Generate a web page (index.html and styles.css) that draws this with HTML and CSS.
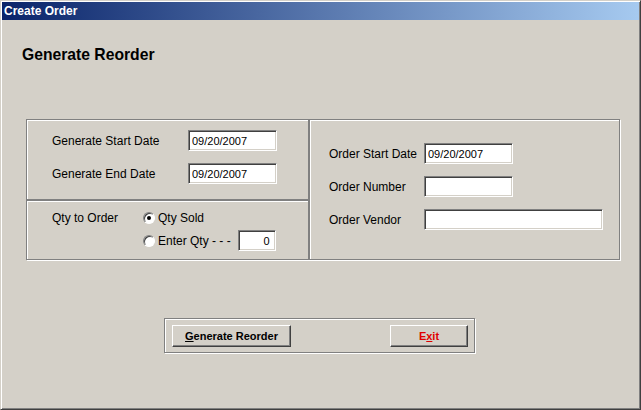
FILE: index.html
```html
<!DOCTYPE html>
<html lang="en">
<head>
    <meta charset="UTF-8">
    <title>Create Order</title>
    <link rel="stylesheet" href="styles.css">
</head>
<body>

<div class="window">
    <div class="title-bar">Create Order</div>
    <div class="content">
        <h1 class="heading">Generate Reorder</h1>

        <div class="groups">
            <div class="frame frame-dates">
                <label class="label">Generate Start Date</label>
                <input type="text" class="field" value="09/20/2007">
                <label class="label">Generate End Date</label>
                <input type="text" class="field" value="09/20/2007">
            </div>

            <div class="frame frame-qty">
                <span class="label">Qty to Order</span>
                <div class="options">
                    <div class="option">
                        <span class="radio checked"></span>
                        <span>Qty Sold</span>
                    </div>
                    <div class="option">
                        <span class="radio"></span>
                        <span>Enter Qty - - -</span>
                        <input type="text" class="field field-qty" value="0">
                    </div>
                </div>
            </div>

            <div class="frame frame-order">
                <label class="label">Order Start Date</label>
                <input type="text" class="field" value="09/20/2007">
                <label class="label">Order Number</label>
                <input type="text" class="field" value="">
                <label class="label">Order Vendor</label>
                <input type="text" class="field field-wide" value="">
            </div>
        </div>

        <div class="frame actions">
            <button class="btn btn-generate"><u>G</u>enerate Reorder</button>
            <button class="btn btn-exit">E<u>x</u>it</button>
        </div>
    </div>
</div>

</body>
</html>
```

FILE: styles.css
```css
body {
    margin: 0;
    font-family: "Liberation Sans", Arial, sans-serif;
    background: #d4d0c8;
}
.window {
    width: 641px;
    height: 410px;
    box-sizing: border-box;
    background: #d4d0c8;
    border: 1px solid;
    border-color: #d4d0c8 #404040 #404040 #d4d0c8;
    box-shadow: inset 1px 1px 0 #fff, inset -1px -1px 0 #808080;
    padding: 1px;
}
.title-bar {
    height: 18px;
    line-height: 18px;
    padding-left: 2px;
    background: linear-gradient(to right, #0a246a, #a6caf0);
    color: #fff;
    font-weight: bold;
    font-size: 12px;
}
.content {
    padding-top: 25px;
}
.heading {
    margin: 0 0 0 20px;
    font-size: 15.7px;
    line-height: 19px;
    font-weight: bold;
}
.groups {
    display: grid;
    grid-template-columns: 283px 311px;
    grid-template-rows: 81px 60px;
    margin: 55px 0 0 24px;
}
.frame {
    box-sizing: border-box;
    border: 1px solid #808080;
    box-shadow: inset 1px 1px 0 #fff, 1px 1px 0 #fff;
}
.label {
    font-size: 12px;
}
.field {
    box-sizing: border-box;
    width: 89px;
    height: 21px;
    margin: 0;
    padding: 0 3px;
    font-family: "Liberation Sans", Arial, sans-serif;
    font-size: 11px;
    color: #000;
    background: #fff;
    border: 1px solid;
    border-color: #808080 #fff #fff #808080;
    box-shadow: inset 1px 1px 0 #404040, inset -1px -1px 0 #d4d0c8;
    outline: none;
}
.frame-dates {
    display: grid;
    grid-template-columns: 136px 89px;
    grid-auto-rows: 21px;
    row-gap: 12px;
    align-items: center;
    padding: 10px 0 0 25px;
}
.frame-qty {
    grid-column: 1;
    grid-row: 2;
    display: flex;
    align-items: flex-start;
    padding: 10px 0 0 25px;
}
.frame-qty .label {
    width: 91px;
    line-height: 14px;
}
.options {
    display: flex;
    flex-direction: column;
    gap: 5px;
    font-size: 12px;
}
.option {
    display: flex;
    align-items: center;
    gap: 3px;
    line-height: 14px;
}
.field-qty {
    width: 38px;
    margin-left: 4px;
    text-align: right;
    padding-right: 5px;
}
.radio {
    position: relative;
    width: 12px;
    height: 12px;
    box-sizing: border-box;
    border-radius: 50%;
    background: #fff;
    border: 1px solid;
    border-color: #808080 #fff #fff #808080;
    box-shadow: inset 1px 1px 0 #404040;
}
.radio.checked::after {
    content: "";
    position: absolute;
    left: 3px;
    top: 3px;
    width: 4px;
    height: 4px;
    border-radius: 50%;
    background: #000;
}
.frame-order {
    grid-column: 2;
    grid-row: 1 / span 2;
    display: grid;
    grid-template-columns: 95px auto;
    grid-auto-rows: 21px;
    row-gap: 12px;
    align-items: center;
    align-content: start;
    justify-items: start;
    padding: 23px 0 0 19px;
}
.field-wide {
    width: 179px;
}
.actions {
    display: flex;
    justify-content: space-between;
    width: 311px;
    height: 35px;
    margin: 58px 0 0 162px;
    padding: 6px 6px 0 7px;
}
.btn {
    height: 22px;
    box-sizing: border-box;
    padding: 0;
    font-family: "Liberation Sans", Arial, sans-serif;
    font-size: 11px;
    font-weight: bold;
    background: #d4d0c8;
    color: #000;
    border: 1px solid;
    border-color: #fff #404040 #404040 #fff;
    box-shadow: inset -1px -1px 0 #808080;
    cursor: pointer;
}
.btn-generate {
    width: 119px;
}
.btn-exit {
    width: 78px;
    color: #e00000;
}
```
